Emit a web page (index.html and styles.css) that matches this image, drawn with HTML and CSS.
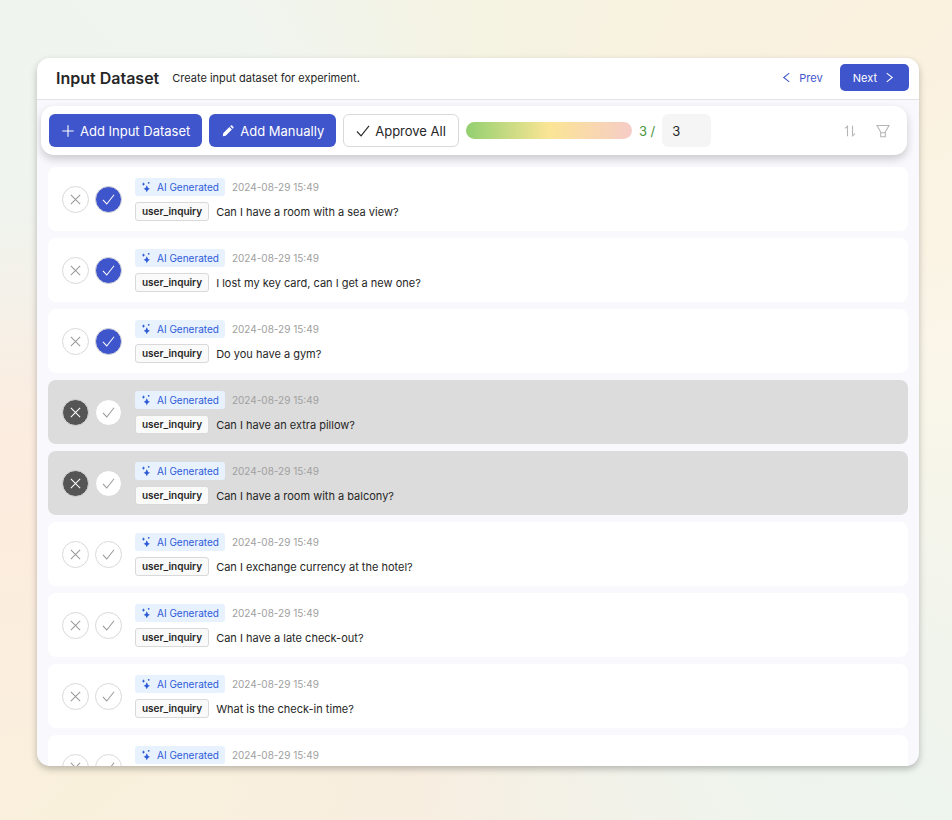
FILE: index.html
```html
<!DOCTYPE html>
<html lang="en">
<head>
<meta charset="utf-8">
<meta name="viewport" content="width=device-width, initial-scale=1">
<title>Input Dataset</title>
<link rel="stylesheet" href="styles.css">
</head>
<body>
<svg class="sprite" aria-hidden="true">
  <symbol id="cross" viewBox="0 0 14 14"><path d="M2 2l10 10M12 2l-10 10"/></symbol>
  <symbol id="check" viewBox="0 0 14 14"><path d="M1 7.5l4.1 4.3L13 1.9"/></symbol>
  <symbol id="plus" viewBox="0 0 14 14"><path d="M7 1.3v11.4M1.3 7h11.4"/></symbol>
  <symbol id="pencil" viewBox="0 0 14 14"><path class="solid" d="M1.8 12.2l.4-2.9 6.2-6.2 2.5 2.5-6.2 6.2zM9.2 2.3l.7-.7q.6-.5 1.2 0l1.3 1.3q.5.6 0 1.2l-.7.7z"/></symbol>
  <symbol id="left" viewBox="0 0 14 14"><path d="M10 2.2L4 7l6 4.8"/></symbol>
  <symbol id="right" viewBox="0 0 14 14"><path d="M4 2.2L10 7l-6 4.8"/></symbol>
  <symbol id="sort" viewBox="0 0 14 14"><path d="M4.5 12.2V2.2M2 4.3l2.5-2.2V4.3M9.5 1.8v10M12 9.7l-2.5 2.2V9.7"/></symbol>
  <symbol id="filter" viewBox="0 0 14 14"><path d="M1 1.5h12L9.3 8.1v4.6H4.7V8.1zM4.7 8.7h4.6"/></symbol>
  <symbol id="sparkles" viewBox="0 0 12 12"><path class="solid" d="M6.8 4.2Q7.4 7.1 10 7.7Q7.4 8.3 6.8 11.2Q6.2 8.3 3.6 7.7Q6.2 7.1 6.8 4.2zM3.5 1.2Q3.8 2.8 5.2 3.1Q3.8 3.4 3.5 5Q3.2 3.4 1.8 3.1Q3.2 2.8 3.5 1.2z"/><circle class="solid" cx="8.7" cy="1.8" r=".9"/></symbol>
</svg>

<main class="panel">
  <header class="header">
    <h1 class="title">Input Dataset</h1>
    <p class="subtitle">Create input dataset for experiment.</p>
    <nav class="steps" aria-label="Steps">
      <button class="step" type="button"><svg class="icon small"><use href="#left"/></svg>Prev</button>
      <button class="step step-primary" type="button">Next<svg class="icon small"><use href="#right"/></svg></button>
    </nav>
  </header>

  <section class="toolbar" aria-label="Dataset actions">
    <button class="button primary" type="button"><svg class="icon"><use href="#plus"/></svg>Add Input Dataset</button>
    <button class="button primary" type="button"><svg class="icon"><use href="#pencil"/></svg>Add Manually</button>
    <button class="button outline" type="button"><svg class="icon"><use href="#check"/></svg>Approve All</button>
    <div class="meter" role="progressbar" aria-label="Approved inputs" aria-valuemin="0" aria-valuemax="3" aria-valuenow="3"></div>
    <label class="count" for="target">3 /</label>
    <input class="target" id="target" type="text" inputmode="numeric" value="3">
    <div class="tools">
      <button class="tool" type="button" aria-label="Sort"><svg class="icon"><use href="#sort"/></svg></button>
      <button class="tool" type="button" aria-label="Filter"><svg class="icon"><use href="#filter"/></svg></button>
    </div>
  </section>

  <ul class="list">
    <li class="row approved">
      <div class="votes">
        <button class="vote reject" type="button" aria-label="Reject"><svg class="icon small"><use href="#cross"/></svg></button>
        <button class="vote approve" type="button" aria-label="Approve"><svg class="icon small"><use href="#check"/></svg></button>
      </div>
      <div class="body">
        <div class="line meta"><span class="tag"><svg class="spark"><use href="#sparkles"/></svg>AI Generated</span><time class="time">2024-08-29 15:49</time></div>
        <div class="line"><span class="key">user_inquiry</span><span class="text">Can I have a room with a sea view?</span></div>
      </div>
    </li>
    <li class="row approved">
      <div class="votes">
        <button class="vote reject" type="button" aria-label="Reject"><svg class="icon small"><use href="#cross"/></svg></button>
        <button class="vote approve" type="button" aria-label="Approve"><svg class="icon small"><use href="#check"/></svg></button>
      </div>
      <div class="body">
        <div class="line meta"><span class="tag"><svg class="spark"><use href="#sparkles"/></svg>AI Generated</span><time class="time">2024-08-29 15:49</time></div>
        <div class="line"><span class="key">user_inquiry</span><span class="text">I lost my key card, can I get a new one?</span></div>
      </div>
    </li>
    <li class="row approved">
      <div class="votes">
        <button class="vote reject" type="button" aria-label="Reject"><svg class="icon small"><use href="#cross"/></svg></button>
        <button class="vote approve" type="button" aria-label="Approve"><svg class="icon small"><use href="#check"/></svg></button>
      </div>
      <div class="body">
        <div class="line meta"><span class="tag"><svg class="spark"><use href="#sparkles"/></svg>AI Generated</span><time class="time">2024-08-29 15:49</time></div>
        <div class="line"><span class="key">user_inquiry</span><span class="text">Do you have a gym?</span></div>
      </div>
    </li>
    <li class="row rejected">
      <div class="votes">
        <button class="vote reject" type="button" aria-label="Reject"><svg class="icon small"><use href="#cross"/></svg></button>
        <button class="vote approve" type="button" aria-label="Approve"><svg class="icon small"><use href="#check"/></svg></button>
      </div>
      <div class="body">
        <div class="line meta"><span class="tag"><svg class="spark"><use href="#sparkles"/></svg>AI Generated</span><time class="time">2024-08-29 15:49</time></div>
        <div class="line"><span class="key">user_inquiry</span><span class="text">Can I have an extra pillow?</span></div>
      </div>
    </li>
    <li class="row rejected">
      <div class="votes">
        <button class="vote reject" type="button" aria-label="Reject"><svg class="icon small"><use href="#cross"/></svg></button>
        <button class="vote approve" type="button" aria-label="Approve"><svg class="icon small"><use href="#check"/></svg></button>
      </div>
      <div class="body">
        <div class="line meta"><span class="tag"><svg class="spark"><use href="#sparkles"/></svg>AI Generated</span><time class="time">2024-08-29 15:49</time></div>
        <div class="line"><span class="key">user_inquiry</span><span class="text">Can I have a room with a balcony?</span></div>
      </div>
    </li>
    <li class="row">
      <div class="votes">
        <button class="vote reject" type="button" aria-label="Reject"><svg class="icon small"><use href="#cross"/></svg></button>
        <button class="vote approve" type="button" aria-label="Approve"><svg class="icon small"><use href="#check"/></svg></button>
      </div>
      <div class="body">
        <div class="line meta"><span class="tag"><svg class="spark"><use href="#sparkles"/></svg>AI Generated</span><time class="time">2024-08-29 15:49</time></div>
        <div class="line"><span class="key">user_inquiry</span><span class="text">Can I exchange currency at the hotel?</span></div>
      </div>
    </li>
    <li class="row">
      <div class="votes">
        <button class="vote reject" type="button" aria-label="Reject"><svg class="icon small"><use href="#cross"/></svg></button>
        <button class="vote approve" type="button" aria-label="Approve"><svg class="icon small"><use href="#check"/></svg></button>
      </div>
      <div class="body">
        <div class="line meta"><span class="tag"><svg class="spark"><use href="#sparkles"/></svg>AI Generated</span><time class="time">2024-08-29 15:49</time></div>
        <div class="line"><span class="key">user_inquiry</span><span class="text">Can I have a late check-out?</span></div>
      </div>
    </li>
    <li class="row">
      <div class="votes">
        <button class="vote reject" type="button" aria-label="Reject"><svg class="icon small"><use href="#cross"/></svg></button>
        <button class="vote approve" type="button" aria-label="Approve"><svg class="icon small"><use href="#check"/></svg></button>
      </div>
      <div class="body">
        <div class="line meta"><span class="tag"><svg class="spark"><use href="#sparkles"/></svg>AI Generated</span><time class="time">2024-08-29 15:49</time></div>
        <div class="line"><span class="key">user_inquiry</span><span class="text">What is the check-in time?</span></div>
      </div>
    </li>
    <li class="row">
      <div class="votes">
        <button class="vote reject" type="button" aria-label="Reject"><svg class="icon small"><use href="#cross"/></svg></button>
        <button class="vote approve" type="button" aria-label="Approve"><svg class="icon small"><use href="#check"/></svg></button>
      </div>
      <div class="body">
        <div class="line meta"><span class="tag"><svg class="spark"><use href="#sparkles"/></svg>AI Generated</span><time class="time">2024-08-29 15:49</time></div>
      </div>
    </li>
  </ul>
</main>
</body>
</html>
```
FILE: styles.css
```css
:root {
  --blue: #3f55cb;
  --ink: #262626;
  --line: #d9d9d9;
}

* {
  box-sizing: border-box;
}

body {
  display: flex;
  height: 100vh;
  margin: 0;
  padding: 58px 33px 54px 37px;
  color: var(--ink);
  font: 11px/18px Inter, "Liberation Sans", sans-serif;
  background:
    radial-gradient(ellipse 50% 35% at 0% 58%, #fcecdf 0%, #fcecdf00 100%),
    conic-gradient(from 0deg at 50% 50%, #f5f3e2 0deg, #fbf1df 50deg, #faf6e9 85deg, #eef4ee 130deg, #eff4ed 145deg, #f8eee0 190deg, #f9f0dc 225deg, #fbeedf 262deg, #eff4ef 282deg, #f1f5ef 330deg, #f5f3e2 360deg);
}

button,
input {
  margin: 0;
  padding: 0;
  border: 0;
  color: inherit;
  font: inherit;
}

button {
  display: inline-flex;
  align-items: center;
  justify-content: center;
  background: none;
  cursor: pointer;
}

.sprite {
  position: absolute;
  width: 0;
  height: 0;
}

.icon {
  flex: none;
  width: 14px;
  height: 14px;
  fill: none;
  stroke: currentColor;
  stroke-width: 1.1;
}

.small {
  width: 13px;
  height: 13px;
}

.solid {
  fill: currentColor;
  stroke: none;
}

.panel {
  display: flex;
  flex: 1;
  flex-direction: column;
  min-width: 0;
  overflow: hidden;
  border-radius: 13px;
  background: #f8f8fd;
  box-shadow: 0 3px 7px #00000040;
}

.header {
  display: flex;
  flex: none;
  align-items: center;
  gap: 13px;
  height: 42px;
  padding: 0 10px 2px 19px;
  border-bottom: 1px solid #e3e3e6;
  background: #fff;
}

.title {
  margin: 0;
  font-size: 16px;
  font-weight: 600;
}

.subtitle {
  margin: 0;
}

.steps {
  display: flex;
  gap: 4px;
  margin-left: auto;
}

.step {
  gap: 6px;
  height: 27px;
  padding: 0 13px;
  border-radius: 5px;
  color: var(--blue);
}

.step-primary {
  background: var(--blue);
  color: #fff;
}

.toolbar {
  display: flex;
  flex: none;
  align-items: center;
  gap: 7px;
  margin: 6px 12px 0 4px;
  padding: 8px;
  border-radius: 13px;
  background: #fff;
  box-shadow: 0 4px 9px #00000030;
  font-size: 13px;
}

.button {
  gap: 5px;
  height: 33px;
  padding: 0 12px;
  border-radius: 6px;
}

.primary {
  background: var(--blue);
  color: #fff;
}

.outline {
  border: 1px solid var(--line);
}

.meter {
  width: 166px;
  height: 17px;
  border-radius: 9px;
  background: linear-gradient(90deg, #93d070, #fbe595 50%, #f6ccc7);
}

.count {
  color: #4c963c;
}

.target {
  width: 49px;
  height: 33px;
  padding: 0 10px;
  border-radius: 6px;
  background: #f5f5f5;
}

.tools {
  display: flex;
  margin-left: auto;
}

.tool {
  width: 33px;
  height: 33px;
  color: #b5b5b5;
}

.list {
  display: flex;
  flex-direction: column;
  gap: 7px;
  margin: 0;
  padding: 12px 11px 0;
  list-style: none;
}

.row {
  display: flex;
  gap: 13px;
  min-height: 64px;
  padding: 11px 14px 10px;
  border-radius: 8px;
  background: #fff;
}

.votes {
  display: flex;
  align-items: center;
  gap: 6px;
}

.vote {
  width: 27px;
  height: 27px;
  border: 1px solid var(--line);
  border-radius: 50%;
  background: #fff;
  color: #999;
}

.approved .approve {
  background: var(--blue);
  color: #fff;
}

.rejected {
  background: #dcdcdc;
}

.rejected .reject {
  background: #555;
  color: #fff;
}

.body {
  display: flex;
  flex-direction: column;
  gap: 6px;
}

.line {
  display: flex;
  align-items: center;
  gap: 7px;
}

.tag {
  display: inline-flex;
  align-items: center;
  gap: 5px;
  height: 18px;
  padding: 0 6px 0 5px;
  border-radius: 3px;
  background: #e7f2fe;
  color: #2f5bd8;
  font-size: 10px;
}

.spark {
  width: 12px;
  height: 12px;
}

.time {
  color: #a0a0a0;
  font-size: 10px;
}

.key {
  height: 19px;
  padding: 0 6px;
  border: 1px solid var(--line);
  border-radius: 3px;
  background: #fafafa;
  font-size: 10px;
  font-weight: 600;
  line-height: 17px;
}
```
